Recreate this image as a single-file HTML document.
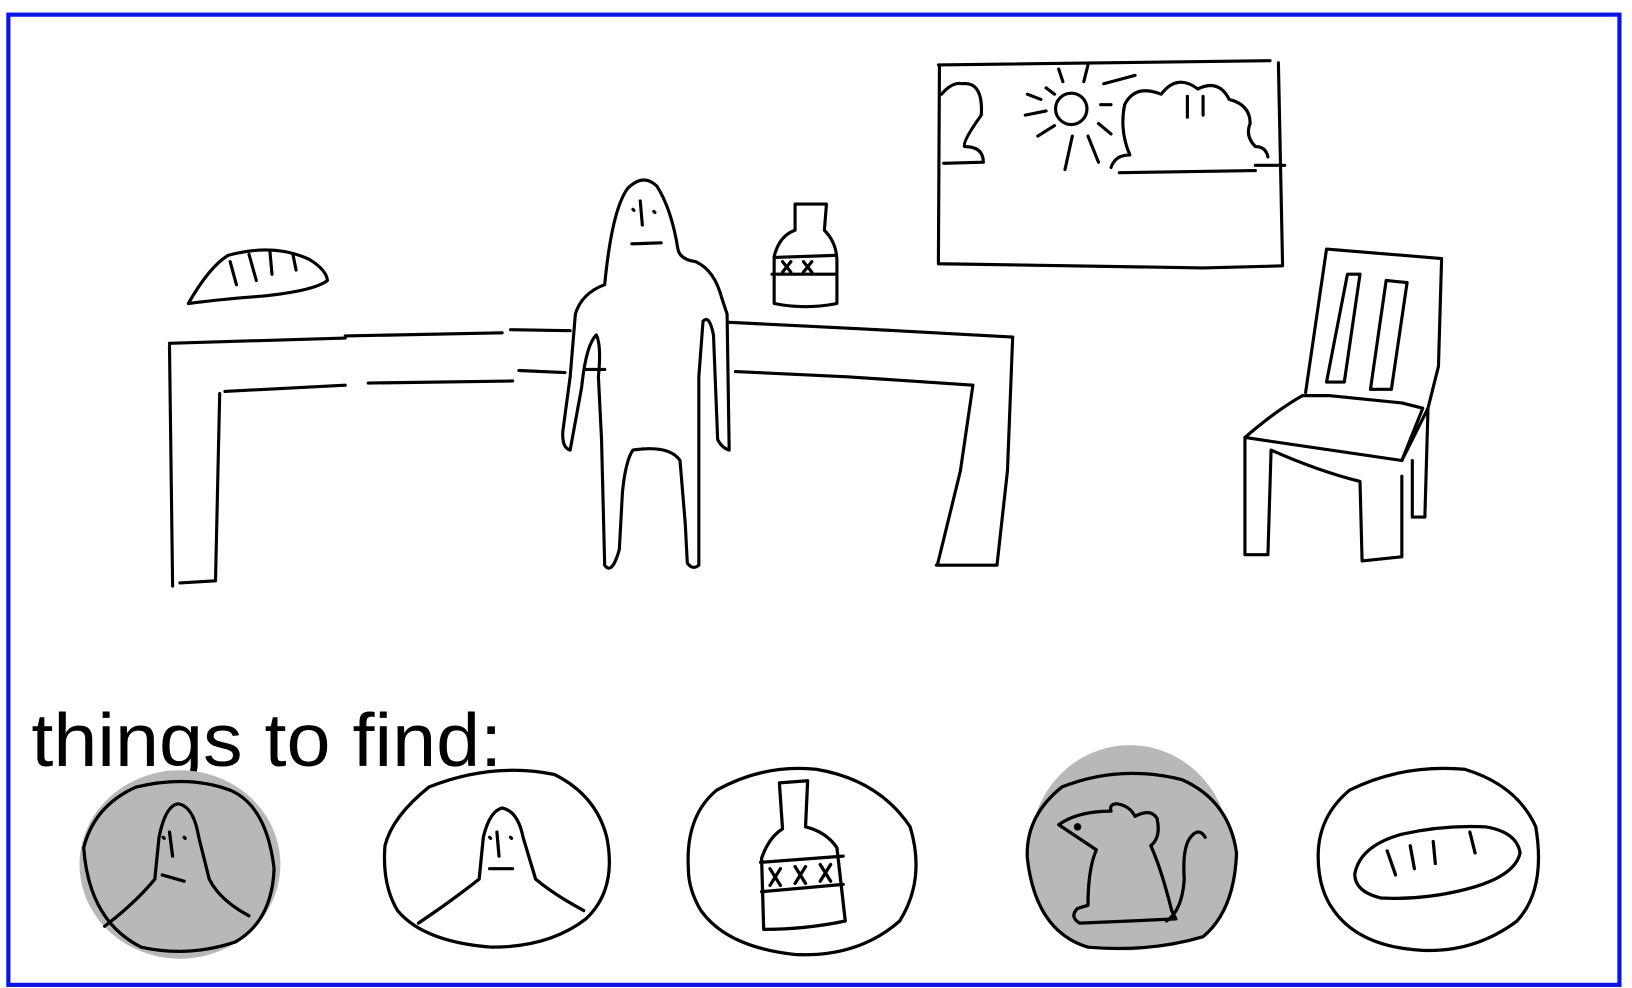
<!DOCTYPE html>
<html><head><meta charset="utf-8"><style>
html,body{margin:0;padding:0;background:#fff;width:1632px;height:988px;overflow:hidden}
svg{display:block}
</style></head><body>
<svg width="1632" height="988" viewBox="0 0 1560 944" preserveAspectRatio="none" xmlns="http://www.w3.org/2000/svg">
<rect width="1560" height="944" fill="#fff"/>
<rect x="8" y="14" width="1540" height="927" fill="none" stroke="#0a14e6" stroke-width="4"/>
<g fill="none" stroke="#000" stroke-width="3" stroke-linecap="round" stroke-linejoin="round">
<!-- bread -->
<path d="M180 290 Q200 255 218 244 Q262 232 296 248 Q312 258 313 268 Q300 278 250 283 Q210 286 180 290Z"/>
<path d="M220 250 L226 272 M238 243 L245 268 M258 240 L260 262 M280 243 L283 258"/>
<!-- table -->
<path d="M162 328 L330 323 M330 321 L480 318 M488 315 L545 316 M697 308 L820 314 L968 322"/>
<path d="M215 374 L330 368 M352 366 L490 364 M496 354 L540 356 M560 353 L578 353 M703 355 L810 360 L930 368"/>
<path d="M162 330 L165 560 M210 376 L206 555 L172 557"/>
<path d="M968 322 L963 450 L953 540 L895 540 M930 368 L918 450 L896 540"/>
<!-- person -->
<path d="M578 272 Q585 200 600 180 Q615 165 628 178 Q642 200 648 238 Q650 248 665 250 Q683 258 690 285 L695 300 L697 430 Q690 428 686 420 L682 320 Q678 300 672 307 L668 360 L668 540 Q662 545 657 538 L655 500 L650 440 Q640 425 605 430 Q598 440 595 470 L592 525 Q585 550 578 540 L575 420 L572 360 Q575 330 570 320 Q560 330 556 370 L545 430 Q537 428 538 412 L545 360 L550 300 Q556 280 578 272Z"/>
<path d="M612 192 L614 215 M605 200 L606 201 M625 202 L626 203 M604 233 L632 232"/>
<!-- bottle -->
<path d="M760 195 L790 195 L788 220 Q800 232 800 250 L800 290 Q770 296 740 290 L740 245 Q745 225 760 220Z"/>
<path d="M740 246 L798 244 M738 262 L798 262 M748 250 L756 260 M756 250 L748 260 M768 250 L776 260 M776 250 L768 260"/>
<!-- window -->
<path d="M897 62 L1214 58 M898 62 L897 252 L1150 256 L1226 254 L1222 60"/>
<path d="M900 90 Q910 78 920 80 Q940 78 938 110 Q920 135 922 140 Q940 140 940 155 L902 156"/>
<circle cx="1024" cy="104" r="15"/>
<path d="M1000 84 L1008 90 M1012 66 L1016 78 M1040 62 L1036 78 M1055 80 L1085 72 M1052 100 L1062 100 M1050 118 L1062 128 M1040 130 L1050 155 M1025 130 L1018 162 M1008 120 L992 130 M1000 106 L980 110 M982 90 L995 95"/>
<path d="M1062 160 Q1066 148 1080 148 Q1070 125 1075 100 Q1085 80 1110 90 Q1125 70 1145 85 Q1165 75 1175 95 Q1195 100 1195 118 Q1190 130 1200 140 Q1210 140 1212 150 M1070 165 L1200 163 M1200 158 L1228 158 M1135 92 L1135 112 M1150 92 L1150 110"/>
<!-- chair -->
<path d="M1268 238 L1378 247 L1375 350 L1365 390 M1268 238 L1248 375 M1288 262 L1300 262 L1285 365 L1268 365Z M1325 268 L1345 270 L1330 372 L1310 372Z"/>
<path d="M1245 378 Q1220 392 1190 418 L1340 440 L1360 390 L1340 385 L1270 378Z"/>
<path d="M1190 418 L1190 530 L1212 530 L1215 430 Q1260 450 1300 460 L1302 536 L1340 532 L1340 455 M1340 440 L1365 390 L1362 494 L1350 494 L1350 440"/>
</g>
<text x="30" y="732" font-family="Liberation Sans, sans-serif" font-size="72" fill="#000" textLength="450" lengthAdjust="spacingAndGlyphs">things to find:</text>
<g stroke="#000" stroke-width="3.1" fill="none" stroke-linecap="round" stroke-linejoin="round">
<!-- circle 1 -->
<ellipse cx="172" cy="826" rx="96" ry="90" fill="#b8b8b8" stroke="none"/>
<path d="M80 810 Q90 770 130 752 Q180 740 220 755 Q255 770 262 830 Q260 880 225 900 Q180 915 135 905 Q85 880 80 810Z" fill="#b8b8b8"/>
<path d="M100 885 Q130 862 148 840 L152 800 Q158 770 170 768 Q185 770 190 800 L200 840 Q210 860 238 875"/>
<path d="M162 795 L165 818 M156 800 L157 801 M176 800 L177 801 M155 836 L176 842"/>
<!-- circle 2 -->
<path d="M368 808 Q375 780 410 752 Q470 728 530 740 Q570 760 580 800 Q590 850 560 878 Q525 905 470 905 Q405 900 380 870 Q365 845 368 808Z"/>
<path d="M400 882 Q430 862 458 840 L462 800 Q468 775 480 772 Q495 775 500 800 L512 840 Q530 855 558 870"/>
<path d="M475 795 L477 818 M468 800 L469 801 M488 800 L489 801 M468 830 L490 830"/>
<!-- circle 3 -->
<path d="M658 830 Q655 780 685 755 Q730 730 780 735 Q840 745 870 790 Q885 840 860 880 Q820 915 760 912 Q695 905 670 870 Q658 850 658 830Z"/>
<path d="M745 748 L772 746 L770 790 Q790 795 800 810 L808 880 Q770 888 730 888 L728 820 Q735 800 748 792Z"/>
<path d="M727 824 L806 818 M728 852 L806 845 M736 830 L746 846 M746 830 L736 846 M760 828 L770 844 M770 828 L760 844 M784 826 L794 842 M794 826 L784 842"/>
<!-- circle 4 -->
<ellipse cx="1080" cy="810" rx="95" ry="98" fill="#b8b8b8" stroke="none"/>
<path d="M982 820 Q980 780 1015 752 Q1070 730 1130 745 Q1175 765 1182 815 Q1180 870 1150 895 Q1100 910 1040 905 Q990 890 982 820Z" fill="#b8b8b8"/>
<path d="M1012 788 Q1030 775 1062 775 Q1060 768 1068 768 Q1080 770 1085 780 Q1100 772 1106 782 Q1110 800 1100 808 Q1110 830 1120 870 L1124 878 L1080 880 L1032 882 Q1022 876 1030 868 L1040 865 Q1040 830 1048 812 Q1030 800 1012 788Z"/>
<path d="M1115 880 Q1130 870 1132 840 Q1130 810 1138 800 Q1146 790 1152 800"/>
<circle cx="1030" cy="790" r="2" fill="#000"/>
<!-- circle 5 -->
<path d="M1260 818 Q1260 780 1290 755 Q1340 730 1400 735 Q1450 750 1468 790 Q1478 850 1450 880 Q1410 910 1360 908 Q1300 905 1275 870 Q1260 850 1260 818Z"/>
<path d="M1295 835 Q1300 808 1340 797 Q1380 788 1420 790 Q1450 795 1453 815 Q1448 838 1400 850 Q1360 860 1320 858 Q1295 852 1295 835Z"/>
<path d="M1326 813 L1334 836 M1348 808 L1352 830 M1370 804 L1372 825 M1405 795 L1410 815"/>
</g>
</svg>
</body></html>
